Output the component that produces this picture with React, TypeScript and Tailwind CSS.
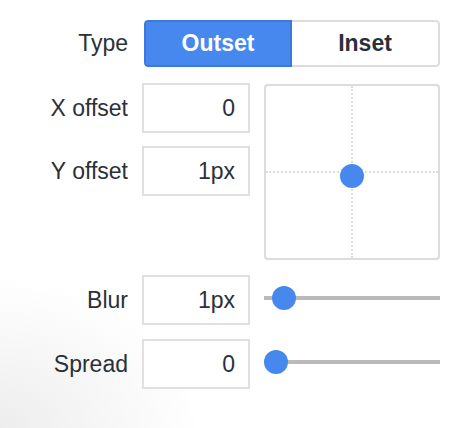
import React from 'react';

const font = { fontFamily: '"Helvetica Neue", "Liberation Sans", Arial, sans-serif' };

const Field: React.FC<{ label: string; value: string }> = ({ label, value }) => (
    <div className="flex items-center">
        <div className="w-[128px] text-right text-[23px] text-[#2b3038]">{label}</div>
        <div className="ml-[14px] w-[108px] h-[50px] border-2 border-[#e0e0e0] bg-white flex items-center justify-end pr-[13px] text-[23px] text-[#2b3038]">
            {value}
        </div>
    </div>
);

const Slider: React.FC<{ pos: number }> = ({ pos }) => (
    <div className="relative ml-[14px] w-[176px] h-[24px] -mt-[4px] flex items-center">
        <div className="w-full h-[4px] bg-[#bababa]" />
        <div
            className="absolute top-0 w-[24px] h-[24px] rounded-full bg-[#4688ee]"
            style={{ left: pos }}
        />
    </div>
);

const App: React.FC = () => {
    return (
        <div
            className="w-[464px] h-[428px] overflow-hidden bg-[radial-gradient(ellipse_200px_150px_at_0%_100%,#ededed,#ffffff)] pt-[20px]"
            style={font}
        >
            {/* Type toggle */}
            <div className="flex items-center">
                <div className="w-[128px] text-right text-[23px] text-[#2b3038]">Type</div>
                <div className="ml-[16px] w-[296px] h-[47px] flex rounded-[4px] overflow-hidden">
                    <button className="w-[148px] h-full bg-[#4688ee] border-2 border-[#3b79dc] rounded-l-[4px] text-white font-bold text-[23px]">
                        Outset
                    </button>
                    <button className="flex-1 h-full bg-white border-2 border-l-0 border-[#dcdcdc] rounded-r-[4px] text-[#2b3038] font-bold text-[23px]">
                        Inset
                    </button>
                </div>
            </div>

            {/* Offsets + pad */}
            <div className="flex mt-[16px]">
                <div className="flex flex-col gap-[13px]">
                    <Field label="X offset" value="0" />
                    <Field label="Y offset" value="1px" />
                </div>
                <div className="relative ml-[14px] mt-[1px] w-[176px] h-[176px] border-2 border-[#dcdcdc] rounded-[4px] bg-white">
                    <div className="absolute left-[85px] top-0 bottom-0 border-l-2 border-dotted border-[#dedede]" />
                    <div className="absolute top-[85px] left-0 right-0 border-t-2 border-dotted border-[#dedede]" />
                    <div className="absolute left-[74px] top-[78px] w-[24px] h-[24px] rounded-full bg-[#4688ee]" />
                </div>
            </div>

            {/* Blur / Spread */}
            <div className="flex flex-col gap-[14px] mt-[15px]">
                <div className="flex items-center">
                    <Field label="Blur" value="1px" />
                    <Slider pos={8} />
                </div>
                <div className="flex items-center">
                    <Field label="Spread" value="0" />
                    <Slider pos={0} />
                </div>
            </div>
        </div>
    );
};

export default App;
